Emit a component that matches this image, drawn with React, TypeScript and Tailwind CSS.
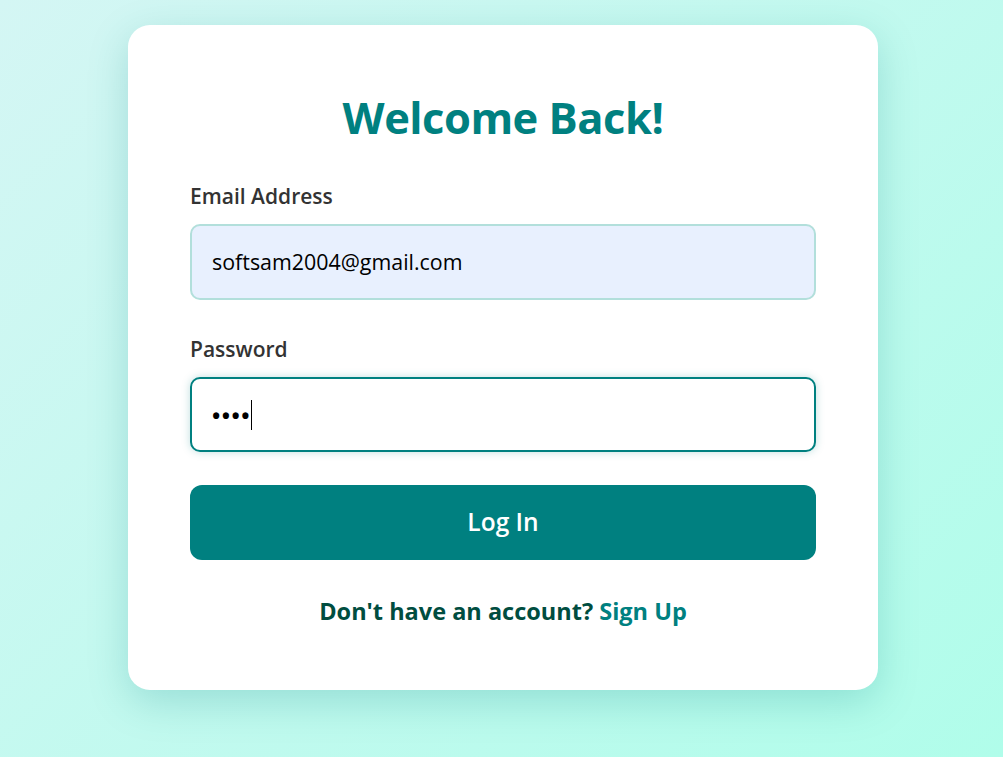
import React from "react";

export default function App() {
  const font = { fontFamily: '"Open Sans", "Noto Sans", "Liberation Sans", sans-serif' };
  return (
    <div
      className="w-full h-[757px] overflow-hidden flex justify-center items-start pl-[3px] bg-[linear-gradient(135deg,#d4f6f4_0%,#b0fdea_100%)]"
      style={font}
    >
      <div className="mt-[25px] w-[750px] h-[665px] bg-white rounded-[22px] shadow-[0_12px_40px_rgba(0,128,128,0.22)] px-[62px] pt-[69px] flex flex-col">
        <h1 className="text-[43.5px] leading-[48px] font-bold text-[#008080] text-center tracking-[-0.5px]">
          Welcome Back!
        </h1>
        <label className="mt-[42px] text-[21px] leading-[24px] font-semibold text-[#333333]">
          Email Address
        </label>
        <div className="mt-[16px] h-[76px] rounded-[10px] border-2 border-[#b2dfdb] bg-[#e8f0fe] flex items-center px-[20px] text-[21.4px] text-black">
          softsam2004@gmail.com
        </div>
        <label className="mt-[37px] text-[21px] leading-[24px] font-semibold text-[#333333]">
          Password
        </label>
        <div className="mt-[16px] h-[75px] rounded-[10px] border-2 border-[#008080] bg-white flex items-center px-[20px] text-black shadow-[0_0_8px_rgba(0,128,128,0.25)]">
          <span className="tracking-[1.5px] text-[22px] leading-none font-bold">••••</span>
          <span className="w-px h-[30px] bg-black"></span>
        </div>
        <button className="mt-[33px] h-[75px] rounded-[12px] bg-[#008080] text-white text-[24.5px] font-semibold flex items-center justify-center">
          Log In
        </button>
        <p className="mt-[38px] text-center text-[23.5px] leading-[27px] font-bold text-[#004d40]">
          Don't have an account? <span className="text-[#008080]">Sign Up</span>
        </p>
      </div>
    </div>
  );
}
